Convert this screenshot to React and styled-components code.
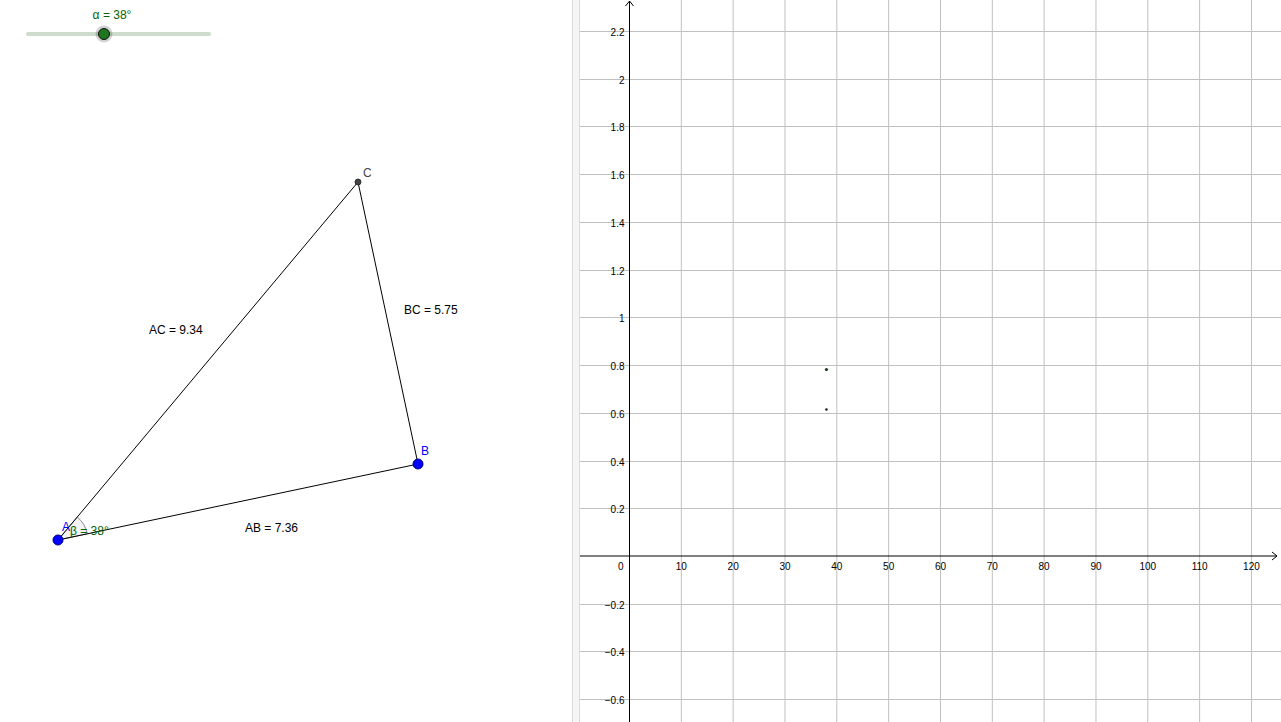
import styled, { createGlobalStyle } from "styled-components"

const GlobalStyle = createGlobalStyle`
    html, body {
        margin: 0;
        padding: 0;
        background: #ffffff;
        overflow: hidden;
    }
    body {
        font-family: "Liberation Sans", Arial, sans-serif;
    }
`

// graphics view: origin and scale taken from the axis ticks
const ORIGIN_X = 49.5
const ORIGIN_Y = 556
const PX_PER_X = 5.183
const PX_PER_Y = 238.65
const VIEW_W = 701
const VIEW_H = 722

const toX = (x) => ORIGIN_X + x * PX_PER_X
const toY = (y) => Math.round(ORIGIN_Y - y * PX_PER_Y) + 0.5

const xTicks = [10, 20, 30, 40, 50, 60, 70, 80, 90, 100, 110, 120, 130]
const yTicks = [-0.6, -0.4, -0.2, 0.2, 0.4, 0.6, 0.8, 1, 1.2, 1.4, 1.6, 1.8, 2, 2.2]

const formatY = (v) => {
    const s = String(Math.round(v * 10) / 10)
    return v < 0 ? "\u2212" + s.slice(1) : s
}

const A = { x: 58, y: 540 }
const B = { x: 418, y: 464 }
const C = { x: 358, y: 182 }

const anglePath = () => {
    const r = 30
    const a1 = Math.atan2(B.y - A.y, B.x - A.x)
    const a2 = Math.atan2(C.y - A.y, C.x - A.x)
    const p1 = { x: A.x + r * Math.cos(a1), y: A.y + r * Math.sin(a1) }
    const p2 = { x: A.x + r * Math.cos(a2), y: A.y + r * Math.sin(a2) }
    return `M ${A.x} ${A.y} L ${p1.x} ${p1.y} A ${r} ${r} 0 0 0 ${p2.x} ${p2.y} Z`
}

const AlgebraView = () => (
    <Canvas width="572" height="722">
        <line x1="28" y1="34" x2="209" y2="34" stroke="#cddccd" strokeWidth="4" strokeLinecap="round" />
        <circle cx="104" cy="34" r="8.5" fill="#000" fillOpacity="0.18" />
        <circle cx="104" cy="34" r="5.5" fill="#1e761e" stroke="#111" strokeWidth="1" />
        <SliderLabel x="112" y="19" textAnchor="middle">α = 38°</SliderLabel>

        <path d={anglePath()} fill="#999" fillOpacity="0.12" stroke="#888" strokeWidth="1" />

        <line x1={A.x} y1={A.y} x2={B.x} y2={B.y} stroke="#000" strokeWidth="1" />
        <line x1={B.x} y1={B.y} x2={C.x} y2={C.y} stroke="#000" strokeWidth="1" />
        <line x1={C.x} y1={C.y} x2={A.x} y2={A.y} stroke="#000" strokeWidth="1" />

        <circle cx={A.x} cy={A.y} r="5" fill="#0000ff" stroke="#00007a" strokeWidth="1" />
        <circle cx={B.x} cy={B.y} r="5" fill="#0000ff" stroke="#00007a" strokeWidth="1" />
        <circle cx={C.x} cy={C.y} r="3" fill="#444" stroke="#222" strokeWidth="0.8" />

        <PointLabel x="62" y="531" $color="#0000ff">A</PointLabel>
        <PointLabel x="421" y="455" $color="#0000ff">B</PointLabel>
        <PointLabel x="363" y="177" $color="#444444">C</PointLabel>

        <AngleLabel x="70" y="535">β = 38°</AngleLabel>

        <SegmentLabel x="149" y="334">AC = 9.34</SegmentLabel>
        <SegmentLabel x="404" y="314">BC = 5.75</SegmentLabel>
        <SegmentLabel x="245" y="532">AB = 7.36</SegmentLabel>
    </Canvas>
)

const GraphicsView = () => (
    <Canvas width={VIEW_W} height={VIEW_H}>
        {xTicks.map((t) => (
            <line key={"gx" + t} x1={toX(t)} y1="0" x2={toX(t)} y2={VIEW_H} stroke="#c0c0c0" strokeWidth="1" />
        ))}
        {yTicks.map((t) => (
            <line key={"gy" + t} x1="0" y1={toY(t)} x2={VIEW_W} y2={toY(t)} stroke="#c0c0c0" strokeWidth="1" />
        ))}

        <line x1="0" y1={ORIGIN_Y} x2={VIEW_W - 4} y2={ORIGIN_Y} stroke="#000" strokeWidth="1" />
        <polyline
            points={`${VIEW_W - 9},${ORIGIN_Y - 4} ${VIEW_W - 4},${ORIGIN_Y} ${VIEW_W - 9},${ORIGIN_Y + 4}`}
            fill="none"
            stroke="#000"
            strokeWidth="1"
        />
        <line x1={ORIGIN_X} y1="1" x2={ORIGIN_X} y2={VIEW_H} stroke="#000" strokeWidth="1" />
        <polyline
            points={`${ORIGIN_X - 4},6 ${ORIGIN_X},1 ${ORIGIN_X + 4},6`}
            fill="none"
            stroke="#000"
            strokeWidth="1"
        />

        {xTicks.slice(0, 12).map((t) => (
            <AxisLabel key={"lx" + t} x={toX(t)} y={ORIGIN_Y + 14} textAnchor="middle">
                {t}
            </AxisLabel>
        ))}
        <AxisLabel x={ORIGIN_X - 6} y={ORIGIN_Y + 14} textAnchor="end">0</AxisLabel>
        {yTicks.map((t) => (
            <AxisLabel key={"ly" + t} x={ORIGIN_X - 5} y={toY(t) + 4} textAnchor="end">
                {formatY(t)}
            </AxisLabel>
        ))}

        <circle cx={toX(38)} cy={toY(0.783)} r="1.6" fill="#1b3a1b" />
        <circle cx={toX(38)} cy={toY(0.616)} r="1.3" fill="#222" />
    </Canvas>
)

const App = () => {
    return (
        <>
            <GlobalStyle />
            <Container>
                <LeftPanel>
                    <AlgebraView />
                </LeftPanel>
                <Divider />
                <RightPanel>
                    <GraphicsView />
                </RightPanel>
            </Container>
        </>
    )
}

export default App

const Container = styled.div`
    display: flex;
    width: 1281px;
    height: 722px;
    background: #ffffff;
    overflow: hidden;
`

const LeftPanel = styled.div`
    width: 572px;
    height: 100%;
    flex-shrink: 0;
`

const Divider = styled.div`
    width: 6px;
    height: 100%;
    flex-shrink: 0;
    background: #f5f5f5;
    border-left: 1px solid #dcdcdc;
    border-right: 1px solid #dcdcdc;
`

const RightPanel = styled.div`
    flex: 1;
    height: 100%;
`

const Canvas = styled.svg`
    display: block;
    font-family: "Liberation Sans", Arial, sans-serif;
`

const SliderLabel = styled.text`
    font-size: 12px;
    fill: #006400;
`

const PointLabel = styled.text`
    font-size: 12px;
    fill: ${(p) => p.$color};
`

const AngleLabel = styled.text`
    font-size: 12px;
    fill: #006400;
`

const SegmentLabel = styled.text`
    font-size: 12px;
    fill: #000000;
`

const AxisLabel = styled.text`
    font-size: 10px;
    fill: #000000;
`
